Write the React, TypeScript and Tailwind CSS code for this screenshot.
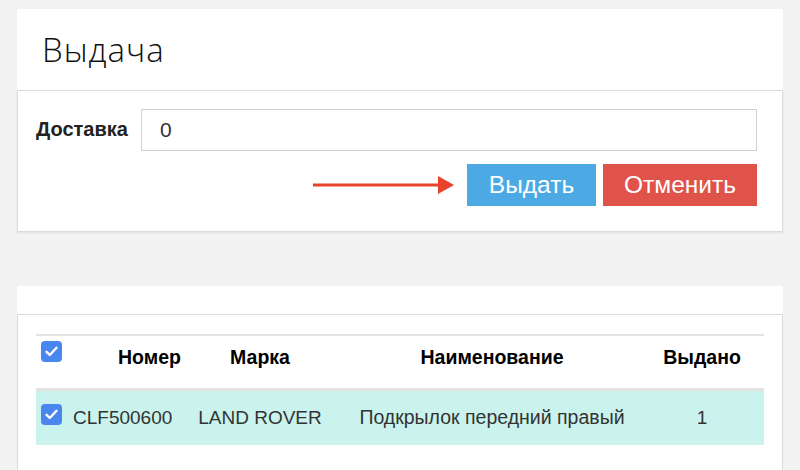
const Check = () => (
  <div className="flex size-[21px] items-center justify-center rounded-[4px] bg-[#4a86f0]">
    <svg width="13" height="11" viewBox="0 0 13 11" fill="none">
      <path d="M1.5 5.8 L4.8 9 L11.5 1.8" stroke="white" strokeWidth="2.4" strokeLinecap="round" strokeLinejoin="round" />
    </svg>
  </div>
);

const Arrow = () => (
  <svg width="142" height="20" viewBox="0 0 142 20" className="mr-[12px]">
    <line x1="0" y1="10" x2="128" y2="10" stroke="#e8412c" strokeWidth="3" />
    <polygon points="125,1 141,10 125,19" fill="#e8412c" />
  </svg>
);

const App = () => {
  return (
    <div
      className="min-h-[470px] w-[800px] bg-[#f2f2f2] px-[17px] pt-[9px]"
      style={{ fontFamily: '"Liberation Sans", Arial, sans-serif' }}
    >
      {/* issue card */}
      <div className="w-[766px]">
        <div className="flex h-[81px] items-center bg-white pl-[25px]">
          <h1 className="text-[33px] font-light tracking-[1px] text-[#111]" style={{ fontFamily: '"Open Sans", sans-serif' }}>
            Выдача
          </h1>
        </div>
        <div className="border border-[#dcdcdc] bg-white pl-[18px] pr-[25px] pt-[18px] pb-[25px] shadow-[0_1px_2px_rgba(0,0,0,0.08)]">
          <div className="flex items-start gap-[12px]">
            <label className="w-[93px] pt-[5px] text-[20px] font-bold text-[#222]">Доставка</label>
            <div className="flex h-[42px] flex-1 items-center border border-[#d0d0d0] px-[18px] text-[21px] text-[#333]">
              0
            </div>
          </div>
          <div className="mt-[13px] flex items-center justify-end">
            <Arrow />
            <button className="h-[42px] w-[129px] bg-[#4da9e3] text-[24.5px] text-white">Выдать</button>
            <button className="ml-[7px] h-[42px] w-[154px] bg-[#e0534a] text-[24.5px] text-white">Отменить</button>
          </div>
        </div>
      </div>

      {/* items card */}
      <div className="mt-[54px] w-[766px]">
        <div className="h-[28px] bg-white" />
        <div className="h-[160px] border border-[#dcdcdc] bg-white px-[18px] pt-[19px]">
          <table className="w-[728px] table-fixed border-collapse">
            <colgroup>
              <col className="w-[32px]" />
              <col className="w-[116px]" />
              <col className="w-[152px]" />
              <col className="w-[312px]" />
              <col className="w-[116px]" />
            </colgroup>
            <thead>
              <tr className="h-[54px] border-t-2 border-b-[3px] border-[#e2e2e2] text-[19.5px] font-bold text-black">
                <th className="pl-[5px] pt-[5px] align-top">
                  <Check />
                </th>
                <th className="pb-[8px] pl-[50px] text-left">Номер</th>
                <th className="pb-[8px] text-center">Марка</th>
                <th className="pb-[8px] text-center">Наименование</th>
                <th className="pb-[8px] pr-[8px] text-center">Выдано</th>
              </tr>
            </thead>
            <tbody>
              <tr className="h-[56px] bg-[#caf3ee] text-[19px] text-[#333]">
                <td className="pl-[5px] pb-[7px]">
                  <Check />
                </td>
                <td className="pl-[5px]">CLF500600</td>
                <td className="text-center">LAND ROVER</td>
                <td className="text-center text-[19.5px]">Подкрылок передний правый</td>
                <td className="pr-[8px] text-center">1</td>
              </tr>
            </tbody>
          </table>
        </div>
      </div>
    </div>
  );
};

export default App;
